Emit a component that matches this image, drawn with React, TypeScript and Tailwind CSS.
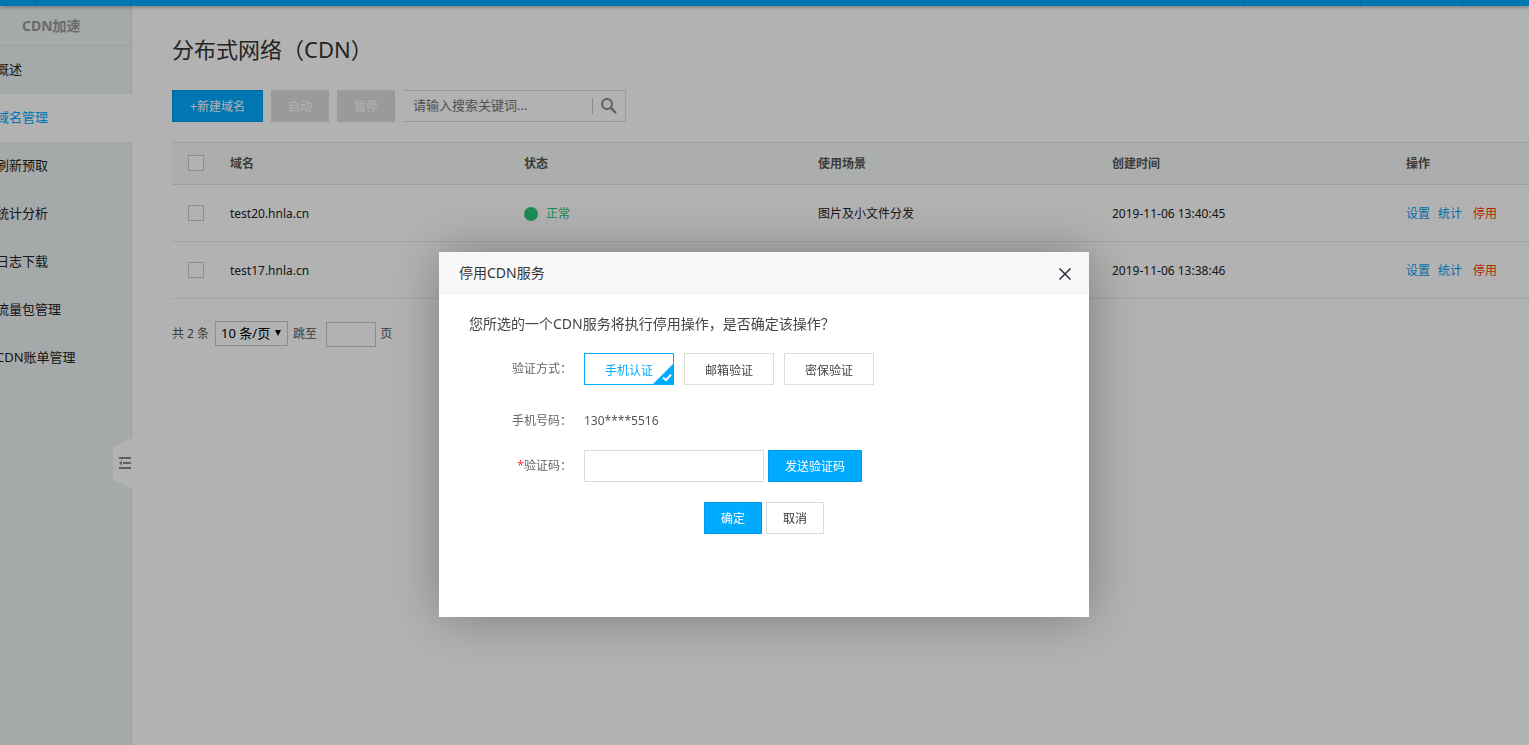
import { useState } from "react";

const navItems = [
  "概述",
  "域名管理",
  "刷新预取",
  "统计分析",
  "日志下载",
  "流量包管理",
  "CDN账单管理",
];

const domains = [
  { name: "test20.hnla.cn", status: "正常", scene: "图片及小文件分发", created: "2019-11-06 13:40:45" },
  { name: "test17.hnla.cn", status: "正常", scene: "图片及小文件分发", created: "2019-11-06 13:38:46" },
];

const verifyMethods = ["手机认证", "邮箱验证", "密保验证"];

const checkboxClass =
  "block size-4 appearance-none border border-[#cccccc] bg-white checked:bg-[#00aaff]";

function TopBar() {
  return (
    <header className="relative z-10 flex h-1.5 shrink-0 bg-[#00aaff] shadow-[0_1px_4px_rgba(0,0,0,0.35)]">
      <div className="w-9 border-r border-[#0099e0]" />
      <div className="w-24 border-r border-[#0099e0]" />
      <div className="flex-1 border-r border-[#0099e0]" />
      <div className="w-29 border-r border-[#0099e0]" />
      <div className="w-[102px] border-r border-[#0099e0]" />
      <div className="w-[66px]" />
    </header>
  );
}

function Sidebar() {
  return (
    <aside className="relative flex w-33 shrink-0 flex-col border-r border-[#e2e4e5] bg-[#edf3f4]">
      <h2 className="h-10 border-b border-[#e0e3e4] pl-[22px] text-sm leading-10 font-bold text-[#999999]">
        CDN加速
      </h2>
      <nav className="flex flex-col text-[13px]">
        {navItems.map((item) => (
          <a
            key={item}
            href="#"
            className={
              item === "域名管理"
                ? "-mr-px h-12 bg-white leading-[46px] text-[#00aaff]"
                : "h-12 leading-[46px] text-[#222222]"
            }
          >
            <span className="-ml-1 whitespace-nowrap">{item}</span>
          </a>
        ))}
      </nav>
    </aside>
  );
}

function CollapseHandle() {
  return (
    <button
      type="button"
      aria-label="收起菜单"
      className="absolute top-[432px] left-[113px] h-[51px] w-[19px]"
    >
      <svg width="19" height="51" viewBox="0 0 19 51" className="block">
        <path d="M19 0L0 9.500V41.500L19 51Z" fill="#ffffff" />
        <path d="M6 19h12v2H6zM10 24h8v2h-8zM6 29h12v2H6z" fill="#888888" />
        <path d="M6 25L9 22.500V27.500Z" fill="#888888" />
      </svg>
    </button>
  );
}

function Toolbar() {
  return (
    <div className="mt-5 flex h-8 gap-2 text-xs">
      <button type="button" className="w-[91px] border border-[#0099e6] bg-[#00aaff] pt-0.5 text-white">
        +新建域名
      </button>
      <button type="button" disabled className="w-[58px] bg-[#dddddd] pt-0.5 text-white">
        启动
      </button>
      <button type="button" disabled className="w-[58px] bg-[#dddddd] pt-0.5 text-white">
        暂停
      </button>
      <form className="flex w-[223px] items-center border-y border-r border-[#dddddd]">
        <input
          type="text"
          aria-label="搜索"
          placeholder="请输入搜索关键词..."
          className="min-w-0 flex-1 pl-2.5 text-[13px] outline-none placeholder:text-[#757575]"
        />
        <button
          type="button"
          aria-label="搜索"
          className="flex h-4 w-[33px] items-center justify-center border-l border-[#cccccc]"
        >
          <svg width="16" height="16" viewBox="0 0 16 16" fill="none" stroke="#888888">
            <circle cx="6" cy="6" r="5" strokeWidth="2" />
            <path d="M9.800 9.800L15 15" strokeWidth="2.400" />
          </svg>
        </button>
      </form>
    </div>
  );
}

function DomainTable() {
  return (
    <table className="mt-5 w-full table-fixed border-separate border-spacing-0 text-left text-xs text-[#222222]">
      <colgroup>
        <col className="w-[42px]" />
        <col className="w-[294px]" />
        <col className="w-[294px]" />
        <col className="w-[294px]" />
        <col className="w-[294px]" />
        <col />
      </colgroup>
      <thead>
        <tr className="h-[43px] bg-[#f7fafa] text-[#555555] *:border-y *:border-[#e2e2e2] *:pl-4">
          <th className="pb-0.5">
            <input type="checkbox" aria-label="全选" className={checkboxClass} />
          </th>
          <th>域名</th>
          <th>状态</th>
          <th>使用场景</th>
          <th>创建时间</th>
          <th>操作</th>
        </tr>
      </thead>
      <tbody>
        {domains.map((d) => (
          <tr key={d.name} className="h-[57px] *:border-b *:border-[#eaeaea] *:pl-4">
            <td>
              <input type="checkbox" aria-label={d.name} className={checkboxClass} />
            </td>
            <td className="pt-0.5">{d.name}</td>
            <td className="pt-0.5">
              <span className="flex items-center gap-2 text-[#29c87a]">
                <i className="size-3.5 rounded-full bg-[#29c87a]" />
                {d.status}
              </span>
            </td>
            <td className="pt-0.5">{d.scene}</td>
            <td className="pt-0.5">{d.created}</td>
            <td className="pt-0.5">
              <span className="flex whitespace-nowrap text-[#00a0f0]">
                <a href="#">设置</a>
                <a href="#" className="ml-2">统计</a>
                <a href="#" className="ml-[11px] text-[#ff3300]">停用</a>
              </span>
            </td>
          </tr>
        ))}
      </tbody>
    </table>
  );
}

function Pagination() {
  return (
    <div className="mt-[22px] flex items-center text-xs text-[#555555]">
      <span>共 2 条</span>
      <div className="relative ml-1.5">
        <select
          aria-label="每页条数"
          className="block h-[25px] w-[73px] appearance-none border border-[#cccccc] bg-white pl-[5px] text-[13px] text-black"
        >
          <option>10 条/页</option>
          <option>20 条/页</option>
        </select>
        <svg width="6" height="6" viewBox="0 0 6 6" className="pointer-events-none absolute top-[9px] right-[7px]">
          <path d="M0 0H6L3 6Z" fill="#000000" />
        </svg>
      </div>
      <label htmlFor="jump" className="ml-[5px]">跳至</label>
      <input id="jump" type="text" className="mt-px -mb-px mr-1 ml-[9px] h-[25px] w-[50px] border border-[#cccccc]" />
      <span>页</span>
    </div>
  );
}

function StopDialog() {
  const [method, setMethod] = useState(verifyMethods[0]);
  return (
    <div className="fixed inset-0 z-20 flex items-start justify-center bg-black/30 pt-[252px] pr-px">
      <section
        role="dialog"
        aria-labelledby="dialog-title"
        className="min-h-[365px] w-[650px] bg-white text-xs text-[#666666] shadow-[1px_1px_50px_rgba(0,0,0,0.3)]"
      >
        <header className="flex h-[42px] items-center justify-between border-b border-[#eeeeee] bg-[#f8f8f8] pr-4 pl-5">
          <h2 id="dialog-title" className="text-sm text-[#333333]">停用CDN服务</h2>
          <button type="button" aria-label="关闭" className="flex h-[18px] w-4 items-end justify-center pb-0.5">
            <svg width="12" height="12" viewBox="0 0 12 12" fill="none" stroke="#2d2c3b" strokeWidth="1.500">
              <path d="M0.500 0.500L11.500 11.500M11.500 0.500L0.500 11.500" />
            </svg>
          </button>
        </header>
        <p className="mt-5 ml-[30px] text-sm text-[#444444]">
          您所选的一个CDN服务将执行停用操作，是否确定该操作？
        </p>
        <fieldset className="mt-[19px] flex h-8 items-center">
          <span className="w-[133px] text-right">验证方式：</span>
          <div className="ml-3 flex gap-2.5">
            {verifyMethods.map((m) => (
              <label
                key={m}
                className={
                  m === method
                    ? "relative flex h-8 w-[90px] items-center justify-center border border-[#00aaff] pt-1 text-[#00aaff]"
                    : "relative flex h-8 w-[90px] items-center justify-center border border-[#dddddd] pt-1 text-[#444444]"
                }
              >
                <input
                  type="radio"
                  name="method"
                  className="sr-only"
                  checked={m === method}
                  onChange={() => setMethod(m)}
                />
                {m}
                {m === method && (
                  <svg width="20" height="20" viewBox="0 0 20 20" className="absolute right-0 bottom-0">
                    <path d="M20 0V20H0Z" fill="#00aaff" />
                    <path d="M10 13.500L13 16.200L18 10.800" fill="none" stroke="#ffffff" strokeWidth="2" />
                  </svg>
                )}
              </label>
            ))}
          </div>
        </fieldset>
        <div className="mt-7 flex h-4 items-center">
          <span className="w-[133px] text-right">手机号码：</span>
          <span className="ml-3 text-[#555555]">130****5516</span>
        </div>
        <div className="mt-[21px] flex h-8 items-center">
          <label htmlFor="code" className="w-[133px] text-right">
            <span className="text-[#ff3333]">*</span>验证码：
          </label>
          <input id="code" type="text" className="ml-3 h-8 w-[180px] border border-[#d8dadc] px-2" />
          <button type="button" className="ml-1 h-8 w-[94px] border border-[#0099e6] bg-[#00aaff] pt-0.5 text-white">
            发送验证码
          </button>
        </div>
        <div className="mt-5 flex justify-center gap-1">
          <button type="button" className="h-8 w-[58px] border border-[#0099e6] bg-[#00aaff] pt-0.5 text-white">
            确定
          </button>
          <button type="button" className="h-8 w-[58px] border border-[#d8dadc] bg-white pt-0.5 text-[#333333]">
            取消
          </button>
        </div>
      </section>
    </div>
  );
}

export default function App() {
  return (
    <div className="flex h-screen flex-col overflow-hidden bg-white font-['Noto_Sans','Noto_Sans_CJK_SC',sans-serif]">
      <TopBar />
      <div className="relative flex flex-1">
        <Sidebar />
        <CollapseHandle />
        <main className="min-w-0 flex-1 overflow-hidden pt-7 pl-10">
          <h1 className="h-9 text-[22px] leading-[30px] text-[#333333]">分布式网络（CDN）</h1>
          <Toolbar />
          <DomainTable />
          <Pagination />
        </main>
      </div>
      <StopDialog />
    </div>
  );
}
